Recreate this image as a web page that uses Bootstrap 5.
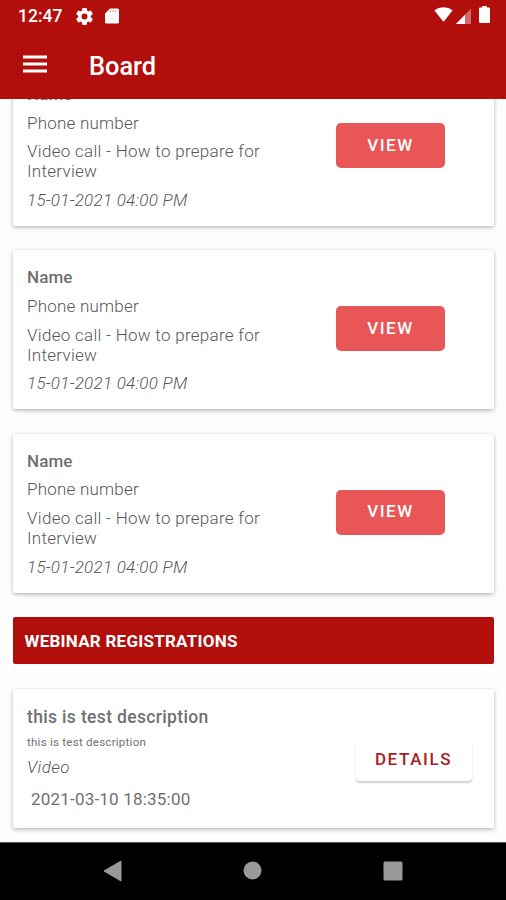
<!DOCTYPE html>
<html lang="en">
<head>
<meta charset="utf-8">
<meta name="viewport" content="width=device-width, initial-scale=1">
<title>Board</title>
<link href="https://cdn.jsdelivr.net/npm/bootstrap@5.3.0/dist/css/bootstrap.min.css" rel="stylesheet">
<style>
  body { font-family: Roboto, "Liberation Sans", sans-serif; font-size: 17px; line-height: 20px; color: #707070; background: #fdfdfd; }
  .brand-bg { background: #b20e0c; }
  .status-bar { height: 32px; padding: 0 16px 0 18px; }
  .clock { font-size: 17.5px; font-weight: 500; letter-spacing: 0; }
  .icon-gear { margin-left: 14px; }
  .icon-card { margin-left: 12px; }
  .icon-signal { margin-left: 3px; }
  .icon-battery { margin-left: 8px; }
  .title-bar { height: 67px; padding: 0 23px; }
  .title-bar svg { margin-bottom: 3px; }
  .title-bar h1 { font-size: 25.4px; font-weight: 500; line-height: 30px; margin-left: 42px; }
  .feed { padding: 0 12px 0 12.5px; }
  .feed-list { gap: 24.3px; margin-top: -32px; }
  .booking, .webinar { border: 0; border-radius: 2px; background: #fff; box-shadow: 0 2px 4px rgba(0,0,0,.22), 0 0 3px rgba(0,0,0,.1); }
  .booking { height: 159px; padding: 17px 0 0 14.5px; }
  .details { gap: 8.7px; width: 260px; }
  .thin { font-weight: 300; color: #585858; }
  .who { font-weight: 500; letter-spacing: .1px; }
  .phone { letter-spacing: .22px; }
  .topic { letter-spacing: .29px; }
  .when { letter-spacing: .27px; }
  .btn-view { width: 109px; height: 45px; margin: 39px 0 0 49px; border-radius: 5px; background: #e85657; color: #fff; font-size: 17px; font-weight: 500; letter-spacing: 1.55px; }
  .btn-view:hover { background: #d94a4b; color: #fff; }
  .section-title { height: 47.5px; padding: 2px 0 0 12px; border-radius: 2px; font-size: 17px; font-weight: 700; letter-spacing: .25px; }
  .webinar { height: 139.5px; padding: 18px 0 0 14.5px; }
  .webinar-info { width: 328px; }
  .webinar-name { font-size: 17.5px; font-weight: 500; letter-spacing: .34px; }
  .webinar-note { font-size: 11.5px; line-height: 14px; margin-top: 8px; letter-spacing: .26px; }
  .webinar-kind { margin-top: 8px; letter-spacing: .4px; }
  .webinar-date { margin: 12px 0 0 4px; letter-spacing: .2px; }
  .btn-details { width: 116px; height: 42px; margin: 32px 0 0 .5px; border: 0; border-radius: 4px; background: #fff; color: #a81e22; font-size: 17px; font-weight: 500; letter-spacing: 1.6px; box-shadow: 0 2px 2px rgba(0,0,0,.18), 0 0 1px rgba(0,0,0,.08); }
  .system-nav { height: 58px; padding: 0 103px 2px 103px; border-top: 1px solid #555; }
</style>
<script src="https://cdn.jsdelivr.net/npm/bootstrap@5.3.0/dist/js/bootstrap.bundle.min.js"></script>
</head>
<body>
<div class="d-flex flex-column vh-100 overflow-hidden">
  <header class="brand-bg text-white flex-shrink-0">
    <div class="status-bar d-flex align-items-center">
      <span class="clock">12:47</span>
      <svg class="icon-gear" width="17" height="17" viewBox="2 2 20 20" fill="#fff"><path d="M19.43 12.98c.04-.32.07-.64.07-.98s-.03-.66-.07-.98l2.11-1.65c.19-.15.24-.42.12-.64l-2-3.46c-.12-.22-.39-.3-.61-.22l-2.49 1c-.52-.4-1.08-.73-1.69-.98l-.38-2.65C14.46 2.18 14.25 2 14 2h-4c-.25 0-.46.18-.49.42l-.38 2.65c-.61.25-1.17.59-1.69.98l-2.49-1c-.23-.09-.49 0-.61.22l-2 3.46c-.13.22-.07.49.12.64l2.11 1.65c-.04.32-.07.65-.07.98s.03.66.07.98l-2.11 1.65c-.19.15-.24.42-.12.64l2 3.46c.12.22.39.3.61.22l2.49-1c.52.4 1.08.73 1.69.98l.38 2.65c.03.24.24.42.49.42h4c.25 0 .46-.18.49-.42l.38-2.65c.61-.25 1.17-.59 1.69-.98l2.49 1c.23.09.49 0 .61-.22l2-3.46c.12-.22.07-.49-.12-.64zM12 15.5a3.5 3.5 0 1 1 0-7 3.5 3.5 0 0 1 0 7z"/></svg>
      <svg class="icon-card" width="14" height="16" viewBox="0 0 14 16"><path d="M5 .5h7.500q1.500 0 1.500 1.500v12q0 1.500-1.500 1.500h-11Q0 15.500 0 14V5.500z" fill="#fff"/><path d="M5.500 2.200v2M8.200 2.200v2M10.900 2.200v2" stroke="#d98584" stroke-width="1"/></svg>
      <svg class="ms-auto mb-1" width="19" height="15" viewBox="0 0 20 16"><path d="M.2 3.500Q4.500.3 10 .3t9.800 3.200L10.800 15q-.8.900-1.600 0z" fill="#fff"/></svg>
      <svg class="icon-signal" width="15" height="16" viewBox="0 0 15 16"><path d="M15 .5V16H0z" fill="#d46a69"/><path d="M9 6.700V16H0z" fill="#fff"/></svg>
      <svg class="icon-battery mb-1" width="11" height="17" viewBox="0 0 11 17"><path d="M3.300 0h4.400v1.500H10q1 0 1 1V16q0 1-1 1H1q-1 0-1-1V2.500q0-1 1-1h2.300z" fill="#fff"/></svg>
    </div>
    <div class="title-bar d-flex align-items-center">
      <svg width="24" height="18" viewBox="0 0 24 18" stroke="#fff" stroke-width="2.800"><path d="M0 2h24M0 9h24M0 16h24"/></svg>
      <h1 class="mb-0">Board</h1>
    </div>
  </header>

  <main class="feed flex-fill overflow-hidden">
    <div class="feed-list d-flex flex-column">
      <article class="booking d-flex align-items-start">
        <div class="details d-flex flex-column">
          <div class="who">Name</div>
          <div class="phone thin">Phone number</div>
          <div class="topic thin">Video call - How to prepare for<br>Interview</div>
          <div class="when thin fst-italic">15-01-2021 04:00 PM</div>
        </div>
        <button class="btn btn-view p-0" type="button">VIEW</button>
      </article>
      <article class="booking d-flex align-items-start">
        <div class="details d-flex flex-column">
          <div class="who">Name</div>
          <div class="phone thin">Phone number</div>
          <div class="topic thin">Video call - How to prepare for<br>Interview</div>
          <div class="when thin fst-italic">15-01-2021 04:00 PM</div>
        </div>
        <button class="btn btn-view p-0" type="button">VIEW</button>
      </article>
      <article class="booking d-flex align-items-start">
        <div class="details d-flex flex-column">
          <div class="who">Name</div>
          <div class="phone thin">Phone number</div>
          <div class="topic thin">Video call - How to prepare for<br>Interview</div>
          <div class="when thin fst-italic">15-01-2021 04:00 PM</div>
        </div>
        <button class="btn btn-view p-0" type="button">VIEW</button>
      </article>
      <h2 class="section-title brand-bg text-white d-flex align-items-center mb-0">WEBINAR REGISTRATIONS</h2>
      <article class="webinar d-flex align-items-start">
        <div class="webinar-info">
          <div class="webinar-name">this is test description</div>
          <div class="webinar-note">this is test description</div>
          <div class="webinar-kind thin fst-italic">Video</div>
          <div class="webinar-date">2021-03-10 18:35:00</div>
        </div>
        <button class="btn btn-details p-0" type="button">DETAILS</button>
      </article>
    </div>
  </main>

  <nav class="system-nav bg-black d-flex align-items-center justify-content-between flex-shrink-0">
    <svg width="19" height="22" viewBox="0 0 19 22"><path d="M18 1v20L1 11z" fill="#999" stroke="#999" stroke-linejoin="round"/></svg>
    <svg width="19" height="19" viewBox="0 0 19 19"><circle cx="9.500" cy="9.500" r="9" fill="#999"/></svg>
    <svg width="20" height="20" viewBox="0 0 20 20"><rect x=".5" y=".5" width="19" height="19" rx="1.500" fill="#999"/></svg>
  </nav>
</div>
</body>
</html>
